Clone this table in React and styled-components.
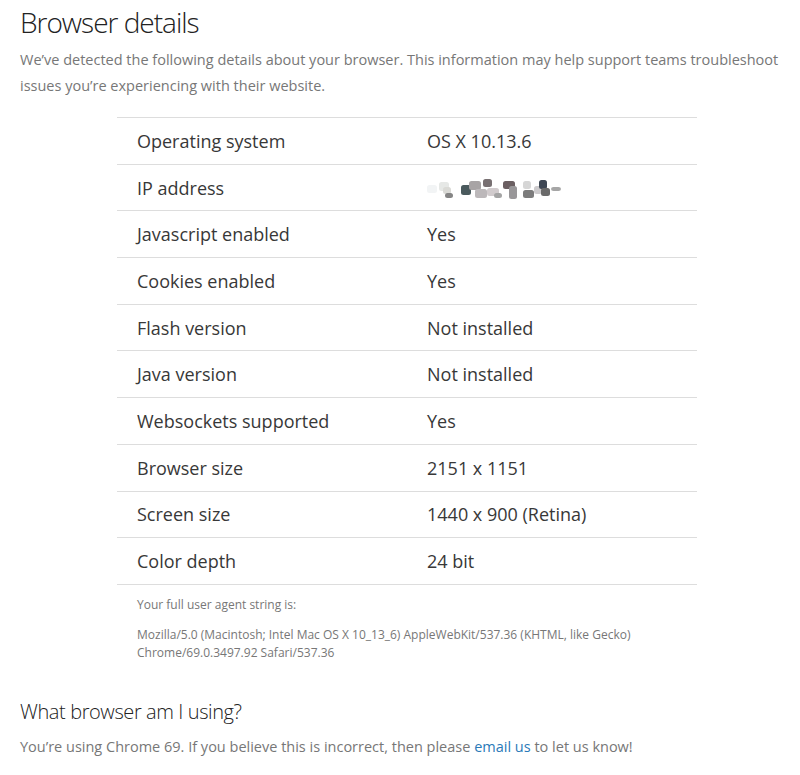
import React from 'react';
import styled, { createGlobalStyle } from 'styled-components';

const Global = createGlobalStyle`
  body {
    margin: 0;
    background: #fff;
    font-family: "Open Sans", "Liberation Sans", sans-serif;
  }
`;

const Page = styled.div`
  padding: 0 20px 20px;
`;

const Title = styled.h1`
  margin: 0;
  padding-top: 3px;
  font-size: 28px;
  font-weight: 300;
  letter-spacing: -1px;
  line-height: 38px;
  color: #222;
`;

const Lead = styled.p`
  margin: 6px 0 0;
  font-size: 14.5px;
  line-height: 26px;
  color: #777;
`;

const Table = styled.div`
  margin: 18px 0 0 97px;
  width: 580px;
  border-top: 1.5px solid #ddd;
`;

const Row = styled.div`
  display: grid;
  grid-template-columns: 310px 1fr;
  align-items: center;
  height: 45.7px;
  border-bottom: 1.5px solid #ddd;
  font-size: 18px;
  color: #383838;
`;

const Label = styled.div`
  padding-left: 20px;
`;

const Value = styled.div``;

const Agent = styled.div`
  padding: 11px 20px 0;
  font-size: 12px;
  line-height: 18px;
  color: #777;
`;

const AgentLead = styled.div`
  margin-bottom: 12px;
`;

const SubTitle = styled.h2`
  margin: 36px 0 0;
  font-size: 20px;
  font-weight: 300;
  letter-spacing: -0.4px;
  line-height: 28px;
  color: #222;
`;

const Foot = styled.p`
  margin: 9px 0 0;
  font-size: 14.5px;
  line-height: 24px;
  color: #777;
`;

const Link = styled.a`
  color: #2a7ab8;
  text-decoration: none;
`;

const Blur = styled.svg`
  display: block;
  margin-top: 2px;
`;

const blobs = [
  [0, 8, 10, 8, '#f2f4f5'], [12, 5, 10, 9, '#e6e8e6'], [16, 10, 8, 7, '#dadad6'],
  [18, 16, 8, 5, '#858585'], [34, 8, 10, 10, '#4a5a5d'], [42, 4, 12, 9, '#a8a4a5'],
  [48, 12, 12, 9, '#bcb8ba'], [56, 2, 9, 8, '#787072'], [60, 11, 12, 8, '#d1cbcd'],
  [67, 16, 8, 5, '#a4a4a4'], [76, 4, 12, 8, '#6b5f62'], [82, 9, 8, 13, '#999799'],
  [96, 4, 8, 8, '#d6d6d6'], [96, 13, 11, 8, '#7c7c7c'], [107, 9, 8, 8, '#cdcbcd'],
  [112, 3, 8, 9, '#3e4754'], [114, 11, 9, 8, '#6a6a6a'], [124, 10, 10, 4, '#a6a6a6'],
];

function BlurredIp() {
  return (
    <Blur width="140" height="24" viewBox="0 0 140 24">
      {blobs.map(([x, y, w, h, c], i) => (
        <rect key={i} x={x} y={y} width={w} height={h} rx="2.5" fill={c} />
      ))}
    </Blur>
  );
}

const ROWS = [
  ['Operating system', 'OS X 10.13.6'],
  ['IP address', null],
  ['Javascript enabled', 'Yes'],
  ['Cookies enabled', 'Yes'],
  ['Flash version', 'Not installed'],
  ['Java version', 'Not installed'],
  ['Websockets supported', 'Yes'],
  ['Browser size', '2151 x 1151'],
  ['Screen size', '1440 x 900 (Retina)'],
  ['Color depth', '24 bit'],
];

export default function App() {
  return (
    <Page>
      <Global />
      <Title>Browser details</Title>
      <Lead>
        We’ve detected the following details about your browser. This information may help support teams troubleshoot
        issues you’re experiencing with their website.
      </Lead>

      <Table>
        {ROWS.map(([label, value]) => (
          <Row key={label}>
            <Label>{label}</Label>
            <Value>{value === null ? <BlurredIp /> : value}</Value>
          </Row>
        ))}
        <Agent>
          <AgentLead>Your full user agent string is:</AgentLead>
          Mozilla/5.0 (Macintosh; Intel Mac OS X 10_13_6) AppleWebKit/537.36 (KHTML, like Gecko)
          Chrome/69.0.3497.92 Safari/537.36
        </Agent>
      </Table>

      <SubTitle>What browser am I using?</SubTitle>
      <Foot>
        You’re using Chrome 69. If you believe this is incorrect, then please <Link href="#">email us</Link> to let us know!
      </Foot>
    </Page>
  );
}
